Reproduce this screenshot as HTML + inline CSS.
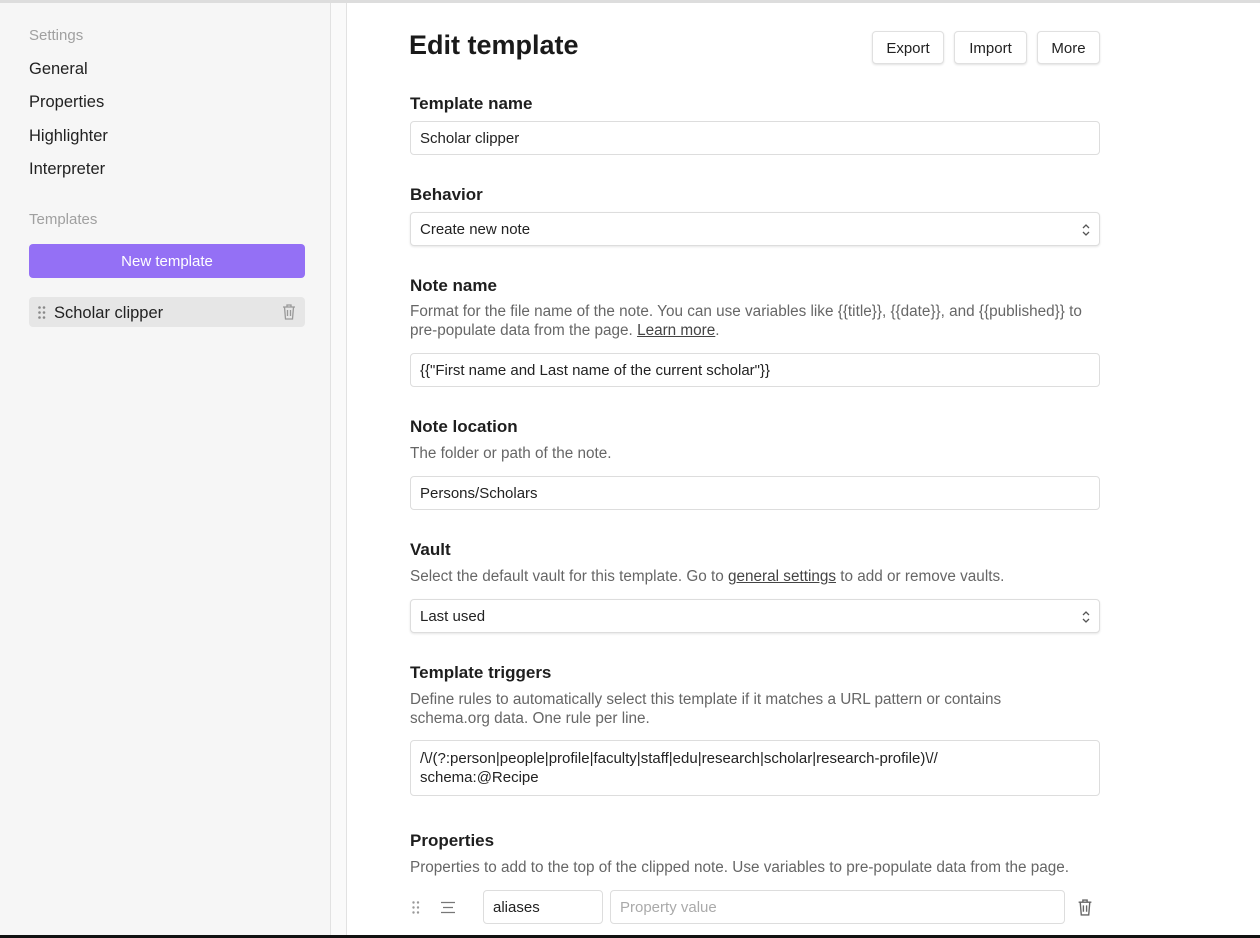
<!DOCTYPE html>
<html><head><style>
*{box-sizing:border-box;margin:0;padding:0}
body{width:1260px;height:938px;overflow:hidden;background:#fff;font-family:"Liberation Sans",sans-serif;color:#222;position:relative}
.top{position:absolute;left:0;top:0;width:1260px;height:3px;background:#ddd}
.bot{position:absolute;left:0;top:935px;width:1260px;height:3px;background:#111}
.side{position:absolute;left:0;top:3px;width:331px;height:932px;background:#f6f6f6;border-right:1px solid #e2e2e2}
.gap{position:absolute;left:331px;top:3px;width:16px;height:932px;background:#fafafa;border-right:1px solid #e2e2e2}
.s{position:absolute;left:29px;font-size:16.5px}
.g{color:#a0a0a0;font-size:15px}
.btnp{position:absolute;left:29px;width:276px;height:34px;background:#9470f5;border-radius:4px;color:#fff;font-size:15px;text-align:center;line-height:36px}
.item{position:absolute;left:29px;width:276px;height:30px;background:#e6e6e6;border-radius:4px;font-size:16.5px;line-height:32px;padding-left:25px}
h1{position:absolute;left:409px;top:30px;font-size:27px;font-weight:bold;color:#1a1a1a}
.b{position:absolute;top:31px;height:33px;border:1px solid #e0e0e0;border-radius:4px;box-shadow:0 1px 2px rgba(0,0,0,.12);font-size:15px;line-height:33px;text-align:center;background:#fff}
.h{position:absolute;left:410px;font-size:17px;font-weight:bold;color:#1e1e1e}
.d{position:absolute;left:410px;font-size:15.3px;color:#666;line-height:19px;width:690px}
.d u{color:#444}
.in{position:absolute;left:410px;width:690px;height:34px;border:1px solid #ddd;border-radius:4px;font-size:15px;line-height:34px;padding-left:9px;background:#fff}
.sel{box-shadow:0 1px 2px rgba(0,0,0,.1)}
</style></head><body>
<div class="top"></div>
<div class="side">
<div class="s g" style="top:24px">Settings</div>
<div class="s" style="top:57px">General</div>
<div class="s" style="top:90px">Properties</div>
<div class="s" style="top:124px">Highlighter</div>
<div class="s" style="top:157px">Interpreter</div>
<div class="s g" style="top:208px">Templates</div>
<div class="btnp" style="top:241px">New template</div>
<div class="item" style="top:294px"><svg style="position:absolute;left:9px;top:9px" width="8" height="13" viewBox="0 0 8 13" fill="#888"><circle cx="1.5" cy="1.5" r="1.3"/><circle cx="6" cy="1.5" r="1.3"/><circle cx="1.5" cy="6.5" r="1.3"/><circle cx="6" cy="6.5" r="1.3"/><circle cx="1.5" cy="11.5" r="1.3"/><circle cx="6" cy="11.5" r="1.3"/></svg>Scholar clipper
<svg style="position:absolute;right:9px;top:7px" width="14" height="16" viewBox="0 0 14 16" fill="none" stroke="#999" stroke-width="1.3"><path d="M1 3h12M5 3V1h4v2M2.5 3l1 12h7l1-12M5.5 6v6M8.5 6v6"/></svg></div>
</div>
<div class="gap"></div>
<h1>Edit template</h1>
<div class="b" style="left:872px;width:72px">Export</div>
<div class="b" style="left:954px;width:73px">Import</div>
<div class="b" style="left:1037px;width:63px">More</div>
<div class="h" style="top:94px">Template name</div>
<div class="in" style="top:121px">Scholar clipper</div>
<div class="h" style="top:185px">Behavior</div>
<div class="in sel" style="top:212px">Create new note<svg style="position:absolute;right:8px;top:10px" width="10" height="14" viewBox="0 0 10 14" fill="none" stroke="#555" stroke-width="1.3"><path d="M2 5l3-3 3 3M2 9l3 3 3-3"/></svg></div>
<div class="h" style="top:276px">Note name</div>
<div class="d" style="top:302px">Format for the file name of the note. You can use variables like {{title}}, {{date}}, and {{published}} to pre-populate data from the page. <u>Learn more</u>.</div>
<div class="in" style="top:353px">{{"First name and Last name of the current scholar"}}</div>
<div class="h" style="top:417px">Note location</div>
<div class="d" style="top:444px">The folder or path of the note.</div>
<div class="in" style="top:476px">Persons/Scholars</div>
<div class="h" style="top:540px">Vault</div>
<div class="d" style="top:567px">Select the default vault for this template. Go to <u>general settings</u> to add or remove vaults.</div>
<div class="in sel" style="top:599px">Last used<svg style="position:absolute;right:8px;top:10px" width="10" height="14" viewBox="0 0 10 14" fill="none" stroke="#555" stroke-width="1.3"><path d="M2 5l3-3 3 3M2 9l3 3 3-3"/></svg></div>
<div class="h" style="top:663px">Template triggers</div>
<div class="d" style="top:690px;width:640px">Define rules to automatically select this template if it matches a URL pattern or contains schema.org data. One rule per line.</div>
<div class="in" style="top:740px;height:56px;line-height:19px;padding-top:8px">/\/(?:person|people|profile|faculty|staff|edu|research|scholar|research-profile)\//<br>schema:@Recipe</div>
<div class="h" style="top:831px">Properties</div>
<div class="d" style="top:858px;width:720px">Properties to add to the top of the clipped note. Use variables to pre-populate data from the page.</div>
<svg style="position:absolute;left:412px;top:901px" width="8" height="13" viewBox="0 0 8 13" fill="#999"><circle cx="1.5" cy="1.5" r="1.2"/><circle cx="6" cy="1.5" r="1.2"/><circle cx="1.5" cy="6.5" r="1.2"/><circle cx="6" cy="6.5" r="1.2"/><circle cx="1.5" cy="11.5" r="1.2"/><circle cx="6" cy="11.5" r="1.2"/></svg>
<svg style="position:absolute;left:440px;top:901px" width="16" height="13" viewBox="0 0 16 13" stroke="#777" stroke-width="1.3"><path d="M1 1.5h14M3 6.5h10M1 11.5h14"/></svg>
<div class="in" style="left:483px;width:120px;top:890px">aliases</div>
<div class="in" style="left:610px;width:455px;top:890px;color:#aaa">Property value</div>
<svg style="position:absolute;left:1077px;top:899px" width="16" height="17" viewBox="0 0 14 16" fill="none" stroke="#666" stroke-width="1.3"><path d="M1 3h12M5 3V1h4v2M2.5 3l1 12h7l1-12M5.5 6v6M8.5 6v6"/></svg>
<div class="bot"></div>
</body></html>
